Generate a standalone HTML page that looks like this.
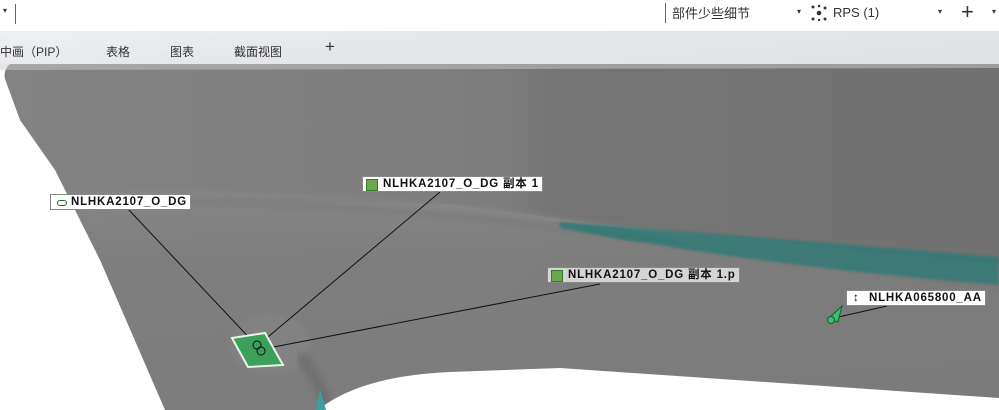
<!DOCTYPE html>
<html><head><meta charset="utf-8"><style>
body{margin:0;width:999px;height:410px;overflow:hidden;position:relative;font-family:"Liberation Sans","Noto Sans CJK SC",sans-serif;background:#fff}
.tb{position:absolute;left:0;top:0;width:999px;height:31px;background:#fff;font-size:13px;color:#333}
.tabs{position:absolute;left:0;top:31px;width:999px;height:33px;background:linear-gradient(174deg,#eef0f3 0%,#e4e6e9 40%,#dfe1e4 100%);font-size:12px;color:#333}
.t{position:absolute;top:12px}
.lbl{position:absolute;background:#fff;border:1px solid #888;font:bold 11.5px "Liberation Sans","Noto Sans CJK SC",sans-serif;letter-spacing:0.8px;color:#111;height:14px;line-height:14px;padding:0 3px 0 20px;white-space:nowrap}
.ic{position:absolute;left:3px;top:2px;width:10px;height:10px;background:#6aa84f;border:1px solid #3a7a2a}
</style></head><body>
<div class="tb">
<span style="position:absolute;left:3px;top:6px;font-size:8px">▾</span>
<div style="position:absolute;left:15px;top:4px;width:1px;height:20px;background:#666"></div>
<div style="position:absolute;left:665px;top:3px;width:1px;height:20px;background:#666"></div>
<span style="position:absolute;left:672px;top:3px">部件少些细节</span>
<span style="position:absolute;left:797px;top:7px;font-size:8px">▾</span>
<svg style="position:absolute;left:810px;top:4px" width="18" height="18"><g fill="#333"><circle cx="3" cy="3" r="1.5"/><circle cx="9" cy="2" r="1.3"/><circle cx="15" cy="4" r="1.5"/><circle cx="9" cy="9" r="2.3"/><circle cx="3" cy="15" r="1.5"/><circle cx="15" cy="15" r="1.5"/><circle cx="9" cy="16" r="1.2"/></g></svg>
<span style="position:absolute;left:833px;top:5px">RPS (1)</span>
<span style="position:absolute;left:938px;top:7px;font-size:8px">▾</span>
<span style="position:absolute;left:961px;top:-1px;font-size:22px">+</span>
<span style="position:absolute;left:992px;top:7px;font-size:8px">▾</span>
</div>
<div class="tabs">
<span class="t" style="left:0">中画（PIP）</span>
<span class="t" style="left:106px">表格</span>
<span class="t" style="left:170px">图表</span>
<span class="t" style="left:234px">截面视图</span>
<span class="t" style="left:325px;top:6px;font-size:17px">+</span>
</div>
<svg style="position:absolute;left:0;top:64px" width="999" height="346">
<defs>
<linearGradient id="g1" x1="0" y1="0" x2="1" y2="0"><stop offset="0" stop-color="#838383"/><stop offset="0.5" stop-color="#7d7d7d"/><stop offset="0.56" stop-color="#757575"/><stop offset="1" stop-color="#717171"/></linearGradient>
<linearGradient id="g2" x1="0" y1="0" x2="0" y2="1"><stop offset="0" stop-color="#858585"/><stop offset="0.3" stop-color="#7e7e7e"/><stop offset="1" stop-color="#7c7c7c"/></linearGradient>
<filter id="bl"><feGaussianBlur stdDeviation="3"/></filter>
<filter id="bl1"><feGaussianBlur stdDeviation="1.2"/></filter>
</defs>
<rect width="999" height="346" fill="url(#g1)"/>
<path d="M0 140 L60 135 L450 140 L600 160 L999 200 L999 346 L0 346Z" fill="url(#g2)" opacity="0.9"/>
<path d="M60 132 Q300 125 520 150 Q620 165 999 215" stroke="#909090" stroke-width="4" fill="none" opacity="0.5" filter="url(#bl)"/>
<path d="M60 140 Q300 134 520 159 Q620 174 999 224" stroke="#6e6e6e" stroke-width="4" fill="none" opacity="0.4" filter="url(#bl)"/>
<path d="M560 158 Q700 168 999 193 L999 221 Q800 205 640 178 Q600 172 560 164Z" fill="#2f7a74" opacity="0.8" filter="url(#bl1)"/>
<path d="M548 158 L620 164 L700 182 L620 176Z" fill="#2f7a74" opacity="0.35"/>
<ellipse cx="270" cy="280" rx="40" ry="30" fill="#8a8a8a" opacity="0.4" filter="url(#bl)"/>
<path d="M330 346 Q320 320 300 290" stroke="#5a5a5a" stroke-width="12" fill="none" opacity="0.35" filter="url(#bl)"/>
<path d="M0 0 L10 0 Q3 6 5 15 L20 56 L55 106 L100 196 L165 346 L0 346Z" fill="#fff"/>
<path d="M318 346 Q360 312 450 308 L560 304 L999 334 L999 346Z" fill="#fff"/>
<path d="M316 346 L320 325 L326 346Z" fill="#3aa0a0"/>
<path d="M0 0 L999 0 L999 4 L0 6Z" fill="#c8cacc" opacity="0.5"/>
</svg>
<svg style="position:absolute;left:0;top:0" width="999" height="410">
<g stroke="#111" stroke-width="1" fill="none">
<line x1="128" y1="209" x2="257" y2="346"/>
<line x1="440" y1="192" x2="262" y2="342"/>
<line x1="600" y1="284" x2="258" y2="350"/>
<line x1="887" y1="306" x2="834" y2="318"/>
</g>
<path d="M232 338 L265 333 L283 365 L248 367Z" fill="#3aa05a" stroke="#e8f5e8" stroke-width="2"/>
<circle cx="257" cy="345" r="4" fill="none" stroke="#111"/><circle cx="261" cy="351" r="4" fill="none" stroke="#111"/>
<path d="M828 319 L842 306 L838 322Z" fill="#3cc070" stroke="#1a5a30"/>
<circle cx="831" cy="320" r="3.5" fill="#3cc070" stroke="#1a5a30"/>
</svg>
<div class="lbl" style="left:50px;top:194px"><span class="ic" style="width:8px;height:4px;top:5px;left:6px;background:#fff;border:1.5px solid #2a6a2a;border-radius:3px"></span>NLHKA2107_O_DG</div>
<div class="lbl" style="left:362px;top:176px"><span class="ic"></span>NLHKA2107_O_DG 副本 1</div>
<div class="lbl" style="left:547px;top:267px;background:#d4d4d4"><span class="ic"></span>NLHKA2107_O_DG 副本 1.p</div>
<div class="lbl" style="left:846px;top:290px;padding-left:22px"><span style="position:absolute;left:6px;top:0">↕</span>NLHKA065800_AA</div>
</body></html>
